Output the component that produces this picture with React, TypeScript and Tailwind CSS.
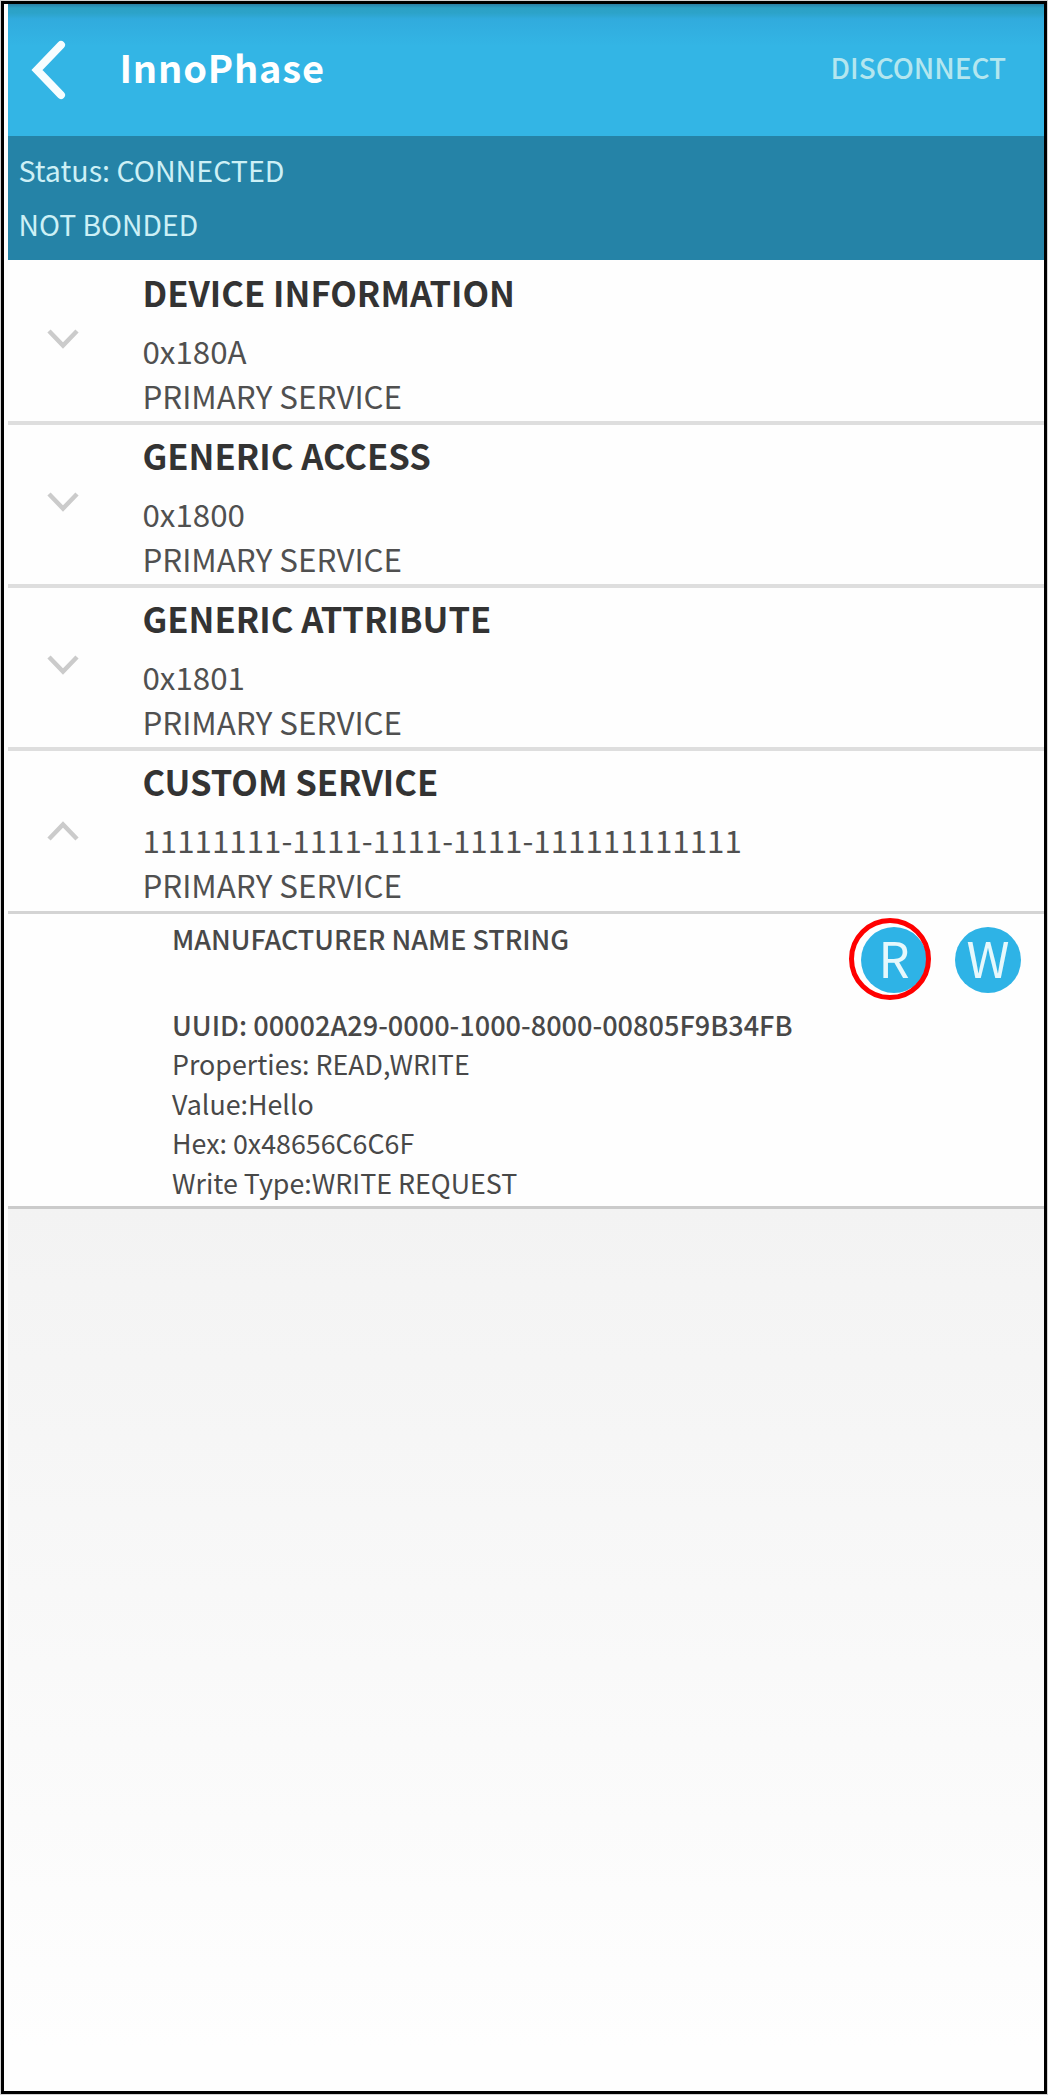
type Service = { name: string; uuid: string; open?: boolean }

const services: Service[] = [
  { name: 'DEVICE INFORMATION', uuid: '0x180A' },
  { name: 'GENERIC ACCESS', uuid: '0x1800' },
  { name: 'GENERIC ATTRIBUTE', uuid: '0x1801' },
  { name: 'CUSTOM SERVICE', uuid: '11111111-1111-1111-1111-111111111111', open: true },
]

function Chevron({ open }: { open?: boolean }) {
  return (
    <svg
      width="32"
      height="20"
      viewBox="0 0 32 20"
      fill="none"
      stroke="#cbcbcb"
      strokeWidth="4.5"
      className={open ? 'mt-[70px]' : 'mt-[66.5px]'}
    >
      <path d={open ? 'M2 18 L16 3.5 L30 18' : 'M2 2 L16 16.5 L30 2'} />
    </svg>
  )
}

function ServiceRow({ name, uuid, open }: Service) {
  return (
    <div
      className={
        open
          ? 'flex h-[163px] border-b-[3px] border-[#d4d4d4]'
          : 'flex h-[163px] border-b-4 border-[#dedede]'
      }
    >
      <div className="flex w-[134.5px] shrink-0 pl-[39px]">
        <Chevron open={open} />
      </div>
      <div className="pt-[7.5px] whitespace-nowrap">
        <h2 className="text-[34.6px] leading-[44px] font-bold text-[#333333]">{name}</h2>
        <p className="mt-3.5 text-[31.3px] leading-[46px] text-[#505050]">{uuid}</p>
        <p className="text-[31.3px] leading-[44px] text-[#505050]">PRIMARY SERVICE</p>
      </div>
    </div>
  )
}

function ActionButton({ label, ringed }: { label: string; ringed?: boolean }) {
  return (
    <button className="relative flex size-[66px] items-center justify-center rounded-full bg-[#2eb3e6] text-[49px] leading-[60px] text-[#e6f8fc]">
      <span className="-mt-1.5">{label}</span>
      {ringed && (
        <span className="absolute -top-[9px] -left-[12px] size-[82px] rounded-full border-[5px] border-[#ff0000]" />
      )}
    </button>
  )
}

export default function App() {
  return (
    <div className="h-[2095px] w-[1048px] bg-[#d3d3d3] p-px font-['Noto_Sans_CJK_SC','Noto_Sans',sans-serif]">
      <div className="flex h-[2093px] w-[1046px] flex-col border-[3px] border-black bg-[#fdfdfd] pl-1">
        <header className="flex h-[132px] shrink-0 items-center bg-[linear-gradient(to_bottom,#2a7fa5_0px,#2ba1c6_4px,#2ca3c9_9px,#31abdd_15px,#33b5e5_42px)] pr-[38px] pb-[7px]">
          <svg
            width="36"
            height="62"
            viewBox="0 0 36 62"
            fill="none"
            stroke="#f6fdff"
            strokeWidth="8"
            strokeLinecap="round"
            className="mt-1.5 ml-[23px]"
          >
            <path d="M30 6 L6 31 L30 56" />
          </svg>
          <h1 className="ml-[52.5px] text-[38px] leading-none font-bold tracking-[0.8px] text-white">
            InnoPhase
          </h1>
          <button className="mt-[3px] ml-auto text-[27.9px] leading-none font-medium text-[#b4e6ef]">
            DISCONNECT
          </button>
        </header>
        <section className="h-[124px] shrink-0 bg-[#2583a7] pt-[6.5px] pl-[10.5px] text-[28.6px] leading-[54.5px] text-[#cdf0f6]">
          <p>Status: CONNECTED</p>
          <p className="text-[28.3px]">NOT BONDED</p>
        </section>
        <main className="shrink-0 bg-[#fefefe] pt-0.5">
          {services.map((s) => (
            <ServiceRow key={s.name} {...s} />
          ))}
          <div className="flex h-[295px] justify-between border-b-[3px] border-[#cbcbcb] pr-[23px] pl-[164px]">
            <div className="pt-[5px] text-[26.8px] leading-[39.6px] whitespace-nowrap text-[#484848]">
              <h3 className="mb-[46px] text-[26.9px] font-medium">MANUFACTURER NAME STRING</h3>
              <p className="text-[27.1px] font-medium">
                UUID: 00002A29-0000-1000-8000-00805F9B34FB
              </p>
              <p>Properties: READ,WRITE</p>
              <p>Value:Hello</p>
              <p>Hex: 0x48656C6C6F</p>
              <p>Write Type:WRITE REQUEST</p>
            </div>
            <div className="flex gap-7 pt-[13px]">
              <ActionButton label="R" ringed />
              <ActionButton label="W" />
            </div>
          </div>
        </main>
        <div className="grow bg-[linear-gradient(to_bottom,#f3f3f3,#fefefe_95%)]" />
      </div>
    </div>
  )
}
